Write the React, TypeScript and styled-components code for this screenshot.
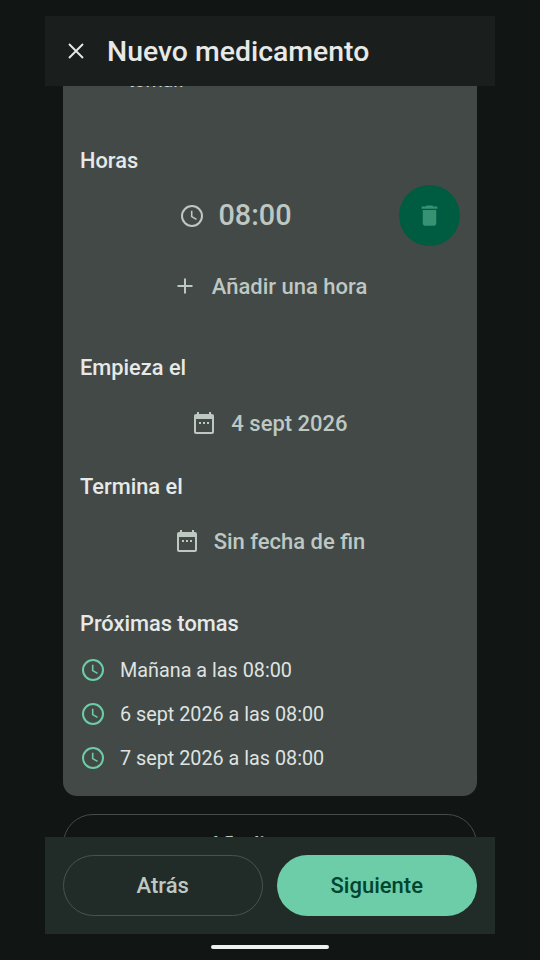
import styled, { createGlobalStyle } from "styled-components";

const Global = createGlobalStyle`
  html, body {
    margin: 0;
    padding: 0;
    background: #111615;
    font-family: Roboto, "Liberation Sans", sans-serif;
  }
`;

const ClockIcon = ({ color }: { color: string }) => (
  <svg width="24" height="24" viewBox="0 0 24 24" fill="none" stroke={color} strokeWidth="2">
    <circle cx="12" cy="12" r="10" />
    <path d="M11.700 6.800v5.800l4.800 2.800" strokeWidth="1.600" />
  </svg>
);

const CalendarIcon = () => (
  <svg width="24" height="24" viewBox="0 0 24 24" fill="#bec8c3">
    <path d="M20 3h-1V1h-2v2H7V1H5v2H4c-1.100 0-2 .9-2 2v16c0 1.100.9 2 2 2h16c1.100 0 2-.9 2-2V5c0-1.100-.9-2-2-2zm0 18H4V8h16v13z" />
    <rect x="7" y="11" width="2" height="2" />
    <rect x="11" y="11" width="2" height="2" />
    <rect x="15" y="11" width="2" height="2" />
  </svg>
);

const PlusIcon = () => (
  <svg width="24" height="24" viewBox="0 0 24 24" fill="none" stroke="#bec8c3" strokeWidth="2">
    <path d="M12 4.500v15M4.500 12h15" />
  </svg>
);

const App = () => (
  <>
    <Global />
    <Screen>
      <Header>
        <CloseButton>
          <svg width="24" height="24" viewBox="0 0 24 24" fill="none" stroke="#e6e9e7" strokeWidth="1.900">
            <path d="M5 5l14 14M19 5L5 19" />
          </svg>
        </CloseButton>
        <Title>Nuevo medicamento</Title>
      </Header>
      <Viewport>
        <Card>
          <ClippedNote>
            <span>tomar.</span>
          </ClippedNote>
          <Label $top={56}>Horas</Label>
          <TimeRow>
            <TimeValue>
              <ClockIcon color="#bec8c3" />
              <span>08:00</span>
            </TimeValue>
            <DeleteButton>
              <svg width="27" height="27" viewBox="0 0 24 24" fill="#379173">
                <path d="M6 19c0 1.100.9 2 2 2h8c1.100 0 2-.9 2-2V7H6v12zM19 4h-3.500l-1-1h-5l-1 1H5v2h14V4z" />
              </svg>
            </DeleteButton>
          </TimeRow>
          <TextRow $top={10}>
            <PlusIcon />
            <span>Añadir una hora</span>
          </TextRow>
          <Label $top={38}>Empieza el</Label>
          <DateRow $top={14}>
            <CalendarIcon />
            <span>4 sept 2026</span>
          </DateRow>
          <Label $top={23}>Termina el</Label>
          <DateRow $top={13}>
            <CalendarIcon />
            <span>Sin fecha de fin</span>
          </DateRow>
          <Label $top={42}>Próximas tomas</Label>
          <DoseList>
            {["Mañana a las 08:00", "6 sept 2026 a las 08:00", "7 sept 2026 a las 08:00"].map((dose) => (
              <Dose key={dose}>
                <ClockIcon color="#6dcda8" />
                <span>{dose}</span>
              </Dose>
            ))}
          </DoseList>
        </Card>
        <OutlineRow>
          <PlusIcon />
          <span>Añadir una toma</span>
        </OutlineRow>
      </Viewport>
      <Footer>
        <BackButton>Atrás</BackButton>
        <NextButton>Siguiente</NextButton>
      </Footer>
      <HomeBar />
    </Screen>
  </>
);

export default App;

const Screen = styled.div`
  display: flex;
  flex-direction: column;
  align-items: center;
  box-sizing: border-box;
  width: 540px;
  height: 960px;
  padding-top: 16px;
  overflow: hidden;
  background: #111615;
`;

const Header = styled.header`
  display: flex;
  align-items: center;
  flex: none;
  width: 450px;
  height: 70px;
  background: #1a1e1d;
`;

const CloseButton = styled.div`
  display: flex;
  align-items: center;
  justify-content: center;
  width: 24px;
  margin-left: 19px;
`;

const Title = styled.h1`
  margin: 0 0 0 19px;
  font-size: 28.4px;
  font-weight: 500;
  color: #e6e9e7;
`;

const Viewport = styled.main`
  flex: none;
  box-sizing: border-box;
  width: 450px;
  height: 751px;
  padding: 0 18px;
  overflow: hidden;
`;

const Card = styled.section`
  display: flex;
  flex-direction: column;
  box-sizing: border-box;
  height: 710px;
  padding: 0 17px 16px;
  background: #424947;
  border-radius: 0 0 14px 14px;
`;

const ClippedNote = styled.div`
  flex: none;
  height: 5px;
  padding-left: 48px;
  overflow: hidden;
  font-size: 19.6px;
  line-height: 24px;
  color: #d8dcda;

  span {
    display: block;
    margin-top: -17px;
  }
`;

const Label = styled.h2<{ $top: number }>`
  margin: ${({ $top }) => $top}px 0 0;
  font-size: 21.8px;
  font-weight: 500;
  line-height: 28px;
  color: #e6e9e7;
`;

const TimeRow = styled.div`
  display: flex;
  align-items: center;
  gap: 7px;
  margin-top: 10px;
`;

const TimeValue = styled.div`
  display: flex;
  flex: 1;
  align-items: center;
  justify-content: center;
  gap: 14px;
  font-size: 28.8px;
  font-weight: 500;
  color: #bec8c3;

  span {
    margin-top: -2px;
  }
`;

const DeleteButton = styled.div`
  display: flex;
  align-items: center;
  justify-content: center;
  flex: none;
  width: 61px;
  height: 61px;
  border-radius: 50%;
  background: #005c41;
`;

const TextRow = styled.div<{ $top: number }>`
  display: flex;
  align-items: center;
  justify-content: center;
  gap: 15px;
  height: 60px;
  margin-top: ${({ $top }) => $top}px;
  font-size: 22px;
  font-weight: 500;
  color: #bec8c3;
`;

const DateRow = styled(TextRow)`
  height: 54px;
`;

const DoseList = styled.ul`
  margin: 10px 0 0;
  padding: 0;
  list-style: none;
`;

const Dose = styled.li`
  display: flex;
  align-items: center;
  gap: 15px;
  height: 44px;
  padding-left: 1px;
  font-size: 19.8px;
  color: #dfe3e1;
`;

const OutlineRow = styled.div`
  display: flex;
  align-items: center;
  justify-content: center;
  gap: 15px;
  box-sizing: border-box;
  height: 61px;
  margin-top: 18px;
  border: 1px solid #444b49;
  border-radius: 30px;
  font-size: 22px;
  font-weight: 500;
  color: #bec8c3;
`;

const Footer = styled.footer`
  display: flex;
  flex: none;
  gap: 14px;
  box-sizing: border-box;
  width: 450px;
  height: 97px;
  padding: 18px 18px 0;
  background: #212b27;
`;

const BackButton = styled.div`
  display: flex;
  align-items: center;
  justify-content: center;
  box-sizing: border-box;
  width: 200px;
  height: 61px;
  border: 1px solid #48524e;
  border-radius: 31px;
  font-size: 22px;
  font-weight: 500;
  color: #bec8c3;
`;

const NextButton = styled.div`
  display: flex;
  align-items: center;
  justify-content: center;
  width: 201px;
  height: 61px;
  margin-left: auto;
  border-radius: 31px;
  background: #6dcda8;
  font-size: 22px;
  font-weight: 500;
  color: #00452f;
`;

const HomeBar = styled.div`
  flex: none;
  width: 118px;
  height: 4px;
  margin-top: 11px;
  border-radius: 2px;
  background: #eef1ef;
`;
